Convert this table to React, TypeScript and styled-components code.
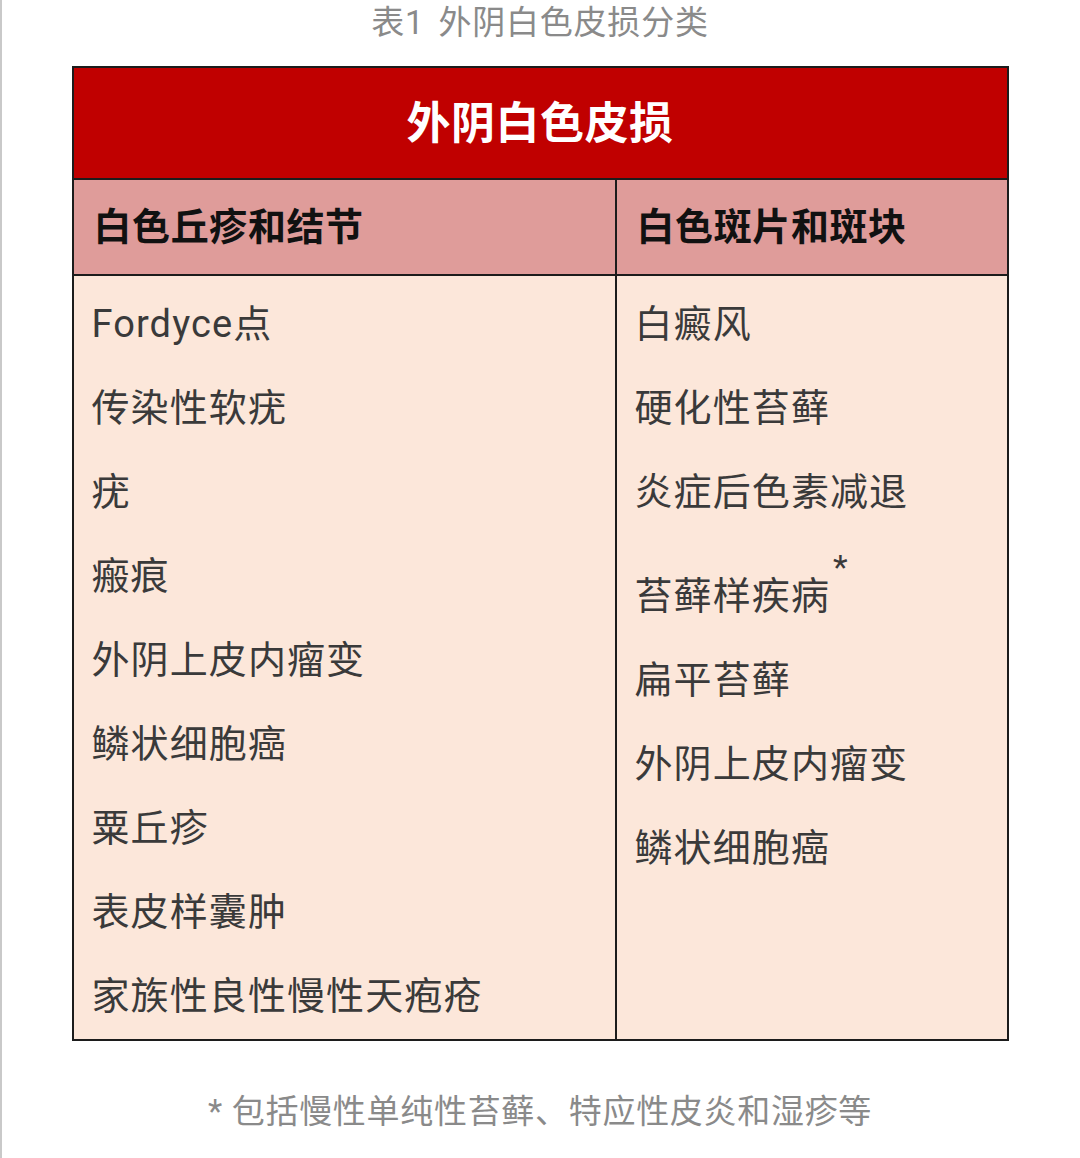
import React from 'react';
import styled, { createGlobalStyle } from 'styled-components';

const GlobalStyle = createGlobalStyle`
  body {
    margin: 0;
    background: #ffffff;
    font-family: Roboto, "Noto Sans CJK SC", sans-serif;
  }
`;

const Page = styled.div`
  min-height: 1158px;
  box-shadow: inset 2px 0 0 #c9c9c9;
  display: flex;
  flex-direction: column;
  align-items: center;
`;

const Caption = styled.div`
  height: 44px;
  line-height: 46px;
  font-size: 33px;
  color: #8a8a8a;
  letter-spacing: 0.8px;
  span {
    margin-right: 14px;
  }
`;

const Table = styled.div`
  margin-top: 22px;
  width: 937px;
  box-sizing: border-box;
  border: 2px solid #1c1c1c;
`;

const TitleRow = styled.div`
  height: 112px;
  box-sizing: border-box;
  padding-bottom: 6px;
  background: #c00000;
  color: #ffffff;
  font-size: 44px;
  font-weight: 700;
  letter-spacing: 0.5px;
  display: flex;
  align-items: center;
  justify-content: center;
  border-bottom: 2px solid #1c1c1c;
`;

const Columns = styled.div`
  display: grid;
  grid-template-columns: 541px 1fr;
`;

const Column = styled.div<{ $divider?: boolean }>`
  display: flex;
  flex-direction: column;
  border-left: ${(p) => (p.$divider ? '2px solid #1c1c1c' : 'none')};
`;

const HeadCell = styled.div`
  height: 96px;
  box-sizing: border-box;
  padding: 0 0 8px 20px;
  background: #df9c9a;
  color: #111111;
  font-size: 38px;
  font-weight: 700;
  letter-spacing: 0.6px;
  display: flex;
  align-items: center;
  border-bottom: 2px solid #1c1c1c;
`;

const Body = styled.div`
  flex: 1;
  background: #fce7da;
  padding: 6px 0 1px 18px;
`;

const Item = styled.div<{ $note?: boolean }>`
  height: 84px;
  line-height: 84px;
  font-size: 38px;
  letter-spacing: 1.1px;
  color: #3a3a3a;
  margin-top: ${(p) => (p.$note ? '20px' : '0')};
  white-space: nowrap;
`;

const Star = styled.span`
  position: relative;
  top: -30px;
  margin-left: 3px;
  font-size: 34px;
  color: #3a3a3a;
`;

const Footnote = styled.div`
  margin-top: 49px;
  height: 44px;
  line-height: 44px;
  font-size: 33px;
  color: #8a8a8a;
  letter-spacing: 0.7px;
`;

const left = [
  'Fordyce点',
  '传染性软疣',
  '疣',
  '瘢痕',
  '外阴上皮内瘤变',
  '鳞状细胞癌',
  '粟丘疹',
  '表皮样囊肿',
  '家族性良性慢性天疱疮',
];

const right = [
  { text: '白癜风' },
  { text: '硬化性苔藓' },
  { text: '炎症后色素减退' },
  { text: '苔藓样疾病', note: true },
  { text: '扁平苔藓' },
  { text: '外阴上皮内瘤变' },
  { text: '鳞状细胞癌' },
];

const App = () => {
  return (
    <Page>
      <GlobalStyle />
      <Caption>
        <span>表1</span>外阴白色皮损分类
      </Caption>
      <Table>
        <TitleRow>外阴白色皮损</TitleRow>
        <Columns>
          <Column>
            <HeadCell>白色丘疹和结节</HeadCell>
            <Body>
              {left.map((t) => (
                <Item key={t}>{t}</Item>
              ))}
            </Body>
          </Column>
          <Column $divider>
            <HeadCell>白色斑片和斑块</HeadCell>
            <Body>
              {right.map((r) => (
                <Item key={r.text} $note={r.note}>
                  {r.text}
                  {r.note && <Star>*</Star>}
                </Item>
              ))}
            </Body>
          </Column>
        </Columns>
      </Table>
      <Footnote>* 包括慢性单纯性苔藓、特应性皮炎和湿疹等</Footnote>
    </Page>
  );
};

export default App;
